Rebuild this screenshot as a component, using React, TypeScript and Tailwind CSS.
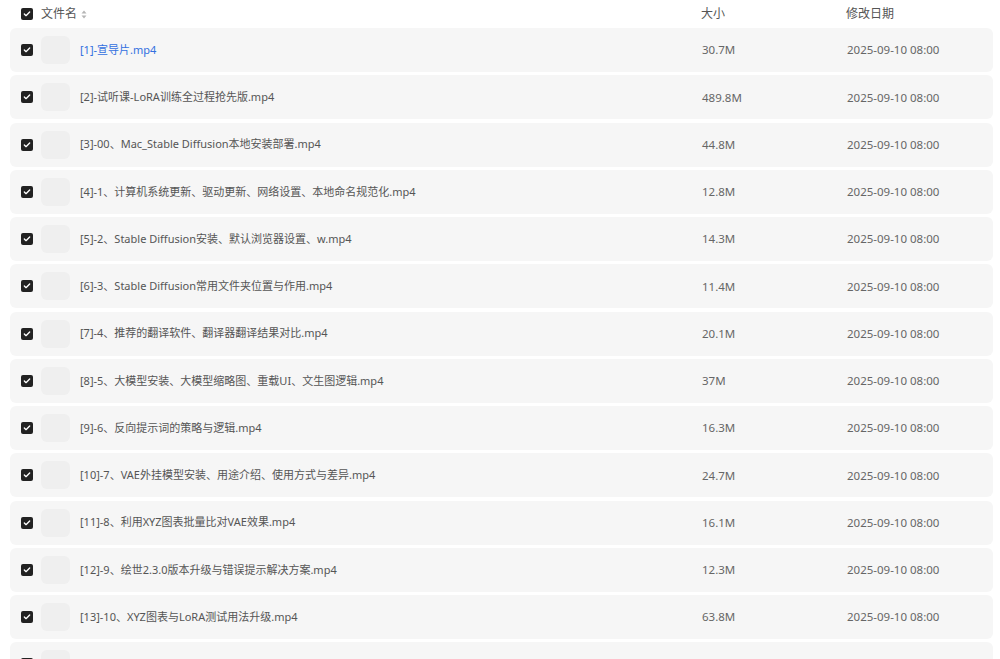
import { Check } from "lucide-react";

type FileRow = {
  name: string;
  size: string;
  date: string;
};

const FILES: FileRow[] = [
  { name: "[1]-宣导片.mp4", size: "30.7M", date: "2025-09-10 08:00" },
  { name: "[2]-试听课-LoRA训练全过程抢先版.mp4", size: "489.8M", date: "2025-09-10 08:00" },
  { name: "[3]-00、Mac_Stable Diffusion本地安装部署.mp4", size: "44.8M", date: "2025-09-10 08:00" },
  { name: "[4]-1、计算机系统更新、驱动更新、网络设置、本地命名规范化.mp4", size: "12.8M", date: "2025-09-10 08:00" },
  { name: "[5]-2、Stable Diffusion安装、默认浏览器设置、w.mp4", size: "14.3M", date: "2025-09-10 08:00" },
  { name: "[6]-3、Stable Diffusion常用文件夹位置与作用.mp4", size: "11.4M", date: "2025-09-10 08:00" },
  { name: "[7]-4、推荐的翻译软件、翻译器翻译结果对比.mp4", size: "20.1M", date: "2025-09-10 08:00" },
  { name: "[8]-5、大模型安装、大模型缩略图、重载UI、文生图逻辑.mp4", size: "37M", date: "2025-09-10 08:00" },
  { name: "[9]-6、反向提示词的策略与逻辑.mp4", size: "16.3M", date: "2025-09-10 08:00" },
  { name: "[10]-7、VAE外挂模型安装、用途介绍、使用方式与差异.mp4", size: "24.7M", date: "2025-09-10 08:00" },
  { name: "[11]-8、利用XYZ图表批量比对VAE效果.mp4", size: "16.1M", date: "2025-09-10 08:00" },
  { name: "[12]-9、绘世2.3.0版本升级与错误提示解决方案.mp4", size: "12.3M", date: "2025-09-10 08:00" },
  { name: "[13]-10、XYZ图表与LoRA测试用法升级.mp4", size: "63.8M", date: "2025-09-10 08:00" },
  // next row peeks in at the bottom, its text is below the fold
  { name: "", size: "", date: "" },
];

function Checkbox() {
  return (
    <span className="flex h-[12px] w-[12px] shrink-0 items-center justify-center rounded-[2px] bg-[#222222]">
      <Check className="h-[8px] w-[8px] text-white" strokeWidth={4} />
    </span>
  );
}

function SortIcon() {
  return (
    <svg width="6" height="9" viewBox="0 0 6 9" className="ml-[4px]">
      <path d="M3 0.5 L5.5 3.5 H0.5 Z" fill="#b5b5b5" />
      <path d="M3 8.5 L5.5 5.5 H0.5 Z" fill="#b5b5b5" />
    </svg>
  );
}

export default function App() {
  return (
    <div
      className="h-[659px] w-[1000px] overflow-hidden bg-white text-[12px]"
      style={{ fontFamily: '"Noto Sans", "Noto Sans CJK SC", sans-serif' }}
    >
      {/* header */}
      <div className="flex h-[28px] items-center pl-[21px] text-[#555555]">
        <Checkbox />
        <span className="ml-[8px] flex items-center">
          文件名
          <SortIcon />
        </span>
        <span className="ml-auto w-[145px]">大小</span>
        <span className="w-[154px]">修改日期</span>
      </div>

      {/* rows */}
      <div className="flex flex-col gap-[3.25px] pl-[10px] pr-[7px]">
        {FILES.map((f, i) => (
          <div
            key={i}
            className="flex h-[44px] shrink-0 items-center rounded-[6px] bg-[#f6f6f6] pl-[11px] text-[#555555]"
          >
            <Checkbox />
            <div className="ml-[8px] h-[28px] w-[29px] shrink-0 rounded-[6px] bg-[#efefef]" />
            <span className={"ml-[10px] flex-1 truncate text-[11px] " + (i === 0 ? "text-[#3370e0]" : "")}>
              {f.name}
            </span>
            <span className="w-[145px] text-[11.5px] text-[#666666]">{f.size}</span>
            <span className="w-[146px] text-[11.5px] text-[#666666]">{f.date}</span>
          </div>
        ))}
      </div>
    </div>
  );
}
